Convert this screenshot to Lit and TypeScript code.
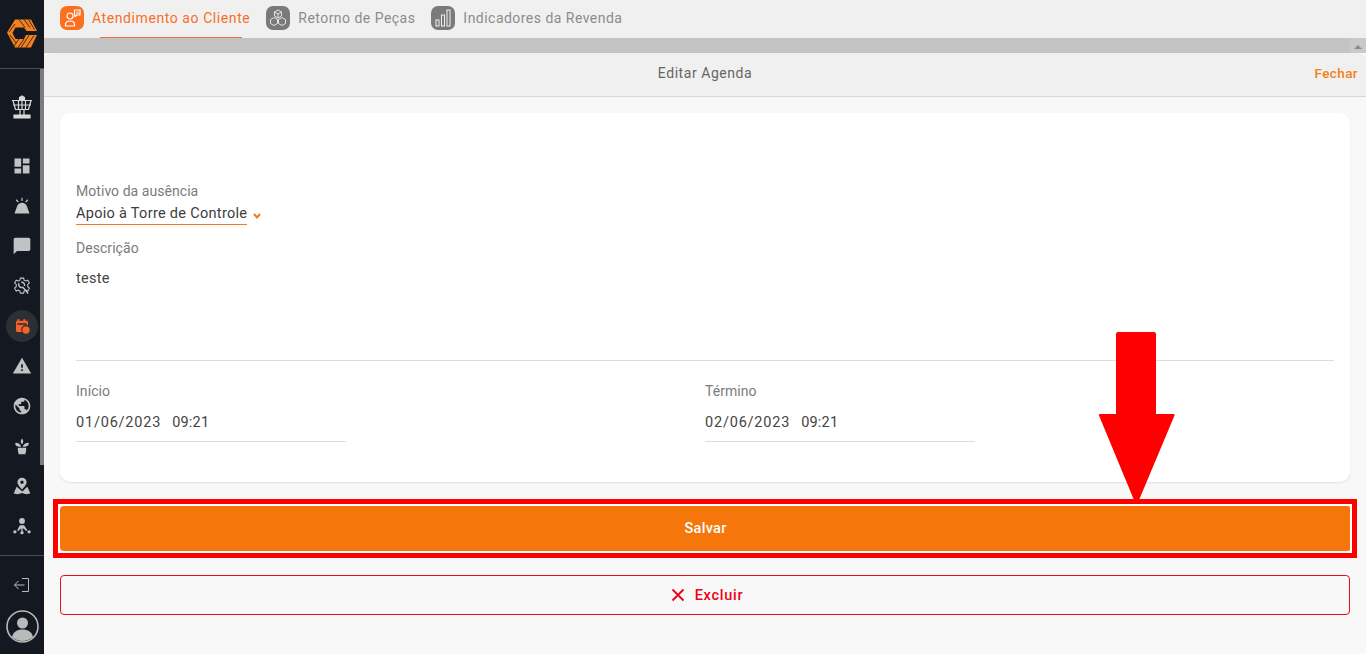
import { LitElement, html, css, svg } from "lit";
import { customElement } from "lit/decorators.js";

const navIcons = [
  svg`<path d="M3 3h8v10H3zM3 15h8v6H3zM13 3h8v6h-8zM13 11h8v10h-8z"/>`,
  svg`<path d="M3 21l3-8.500C7 9.500 9.500 8 12 8s5 1.500 6 4.500L21 21zM11.300 2h1.400v4h-1.400zM4.500 5l1.100-1 2.600 2.800-1.100 1zM19.500 5l-1.100-1-2.600 2.800 1.100 1z"/>`,
  svg`<path d="M20 2H4c-1.100 0-2 .9-2 2v18l4-4h14c1.100 0 2-.9 2-2V4c0-1.100-.9-2-2-2z"/>`,
  svg`<g fill="none" stroke="currentColor" stroke-width="1.300"><path d="M10 2.500h4l.5 2.500 2 1 2.400-1 2 3.400-2 1.700v2.800l2 1.700-2 3.400-2.400-1-2 1-.5 2.500h-4l-.5-2.500-2-1-2.400 1-2-3.400 2-1.700V10.100l-2-1.700 2-3.400 2.400 1 2-1z"/><path d="M8.500 8.500a3.500 3.500 0 0 0 4.500 5l6.500 7.500M11 7.500a3.500 3.500 0 0 1 4 4.500" stroke-width="1.700"/></g>`,
  null,
  svg`<path d="M1 21h22L12 2 1 21zm12-3h-2v-2h2v2zm0-4h-2v-4h2v4z"/>`,
  svg`<path d="M12 2C6.480 2 2 6.480 2 12s4.480 10 10 10 10-4.480 10-10S17.520 2 12 2zm-1 17.930c-3.950-.49-7-3.850-7-7.930 0-.62.08-1.210.21-1.790L9 15v1c0 1.100.9 2 2 2v1.930zm6.900-2.540c-.26-.81-1-1.390-1.900-1.390h-1v-3c0-.55-.45-1-1-1H8v-2h2c.55 0 1-.45 1-1V7h2c1.100 0 2-.9 2-2v-.41c2.930 1.190 5 4.060 5 7.410 0 2.080-.8 3.970-2.100 5.390z"/>`,
  svg`<path d="M7 14h10v3l-1 5H8l-1-5zM11 13C10 9 7 8 4 8c-.3 3 1 5 7 5zM13 13c1-4 4-5 7-5 .3 3-1 5-7 5zM12 10c-2-2-2-5 0-7 2 2 2 5 0 7z"/>`,
  svg`<path fill-rule="evenodd" d="M12 2a5.500 5.500 0 0 0-5.500 5.500C6.500 11 12 16 12 16s5.500-5 5.500-8.500A5.500 5.500 0 0 0 12 2zm0 3.500a2 2 0 1 1 0 4 2 2 0 0 1 0-4z"/><path d="M5.500 13L2 21l5 1 5-1.500 5 1.500 5-1-3.500-8-1.500 1-4.500 4.500L7 14z"/>`,
  svg`<circle cx="12" cy="6" r="3.500"/><circle cx="3.500" cy="19" r="2"/><circle cx="12" cy="20" r="2"/><circle cx="20.500" cy="19" r="2"/><path d="M9.500 11h5l4 6-1.500 1-3-3h-1.200V18h-1.600v-3H10.700l-3 3-1.500-1z"/>`,
];

@customElement("app-root")
export class AppRoot extends LitElement {
  static styles = css`
    :host {
      display: block;
      position: relative;
      width: 1366px;
      height: 654px;
      overflow: hidden;
      font-family: "Roboto", "Liberation Sans", sans-serif;
      background: #f8f8f8;
    }
    .shell { display: flex; height: 654px; }
    .side {
      width: 44px;
      flex: none;
      background: #141820;
      display: flex;
      flex-direction: column;
      align-items: center;
      position: relative;
    }
    .logo {
      width: 100%;
      height: 69px;
      flex: none;
      border-bottom: 1px solid #4a4d52;
      box-sizing: border-box;
      display: flex;
      align-items: center;
      justify-content: center;
    }
    .logo svg { width: 32px; height: 32px; margin-top: -5px; }
    .tower { margin-top: 25px; color: #d8d8d8; width: 24px; height: 26px; display: block; }
    .nav { margin-top: 26px; display: flex; flex-direction: column; align-items: center; }
    .item { width: 32px; height: 40px; display: flex; align-items: center; justify-content: center; color: #c0c2c4; }
    .item svg { width: 20px; height: 20px; fill: currentColor; }
    .item.active .disc {
      width: 32px; height: 32px; border-radius: 50%; background: #2c2f33;
      display: flex; align-items: center; justify-content: center;
    }
    .item.active svg { width: 16px; height: 16px; }
    .bottom {
      margin-top: auto;
      width: 100%;
      height: 99px;
      border-top: 1px solid #4a4d52;
      box-sizing: border-box;
      display: flex;
      flex-direction: column;
      align-items: center;
      color: #b8babc;
    }
    .exit { width: 18px; height: 18px; margin-top: 20px; }
    .avatar { width: 33px; height: 33px; margin-top: 16px; }
    .thumb { position: absolute; left: 40px; top: 69px; width: 4px; height: 396px; background: #7c7c7c; }

    .main { flex: 1; min-width: 0; display: flex; flex-direction: column; }
    .tabs { height: 38px; background: #f0f0f0; display: flex; align-items: flex-start; padding: 6px 0 0 16px; box-sizing: border-box; gap: 16px; flex: none; }
    .tab { display: flex; align-items: center; gap: 8px; height: 32px; position: relative; align-self: flex-start; color: #8c8c8c; font-size: 14px; letter-spacing: 0.47px; margin-top: -4px; }
    .tab.on { color: #f4702a; letter-spacing: 0.58px; }
    .tab.on::after { content: ""; position: absolute; left: 40px; width: 142px; top: 35px; height: 1px; background: #f0723a; }
    .tab svg { width: 24px; height: 24px; }
    .band { height: 15px; background: #c4c4c4; flex: none; display: flex; justify-content: flex-end; }
    .sbtn { width: 16px; background: #c9c9c9; display: flex; align-items: center; justify-content: center; }
    .tri { width: 0; height: 0; border-left: 4px solid transparent; border-right: 4px solid transparent; border-bottom: 4px solid #8a8a8a; margin-top: 3px; }
    .sheet { flex: 1; background: #f8f8f8; border-radius: 8px 8px 0 0; display: flex; flex-direction: column; overflow: hidden; }
    .head { height: 44px; flex: none; background: #f0f0f0; border-bottom: 1px solid #d8d8d8; box-sizing: border-box; padding-bottom: 3px; display: flex; align-items: center; justify-content: center; position: relative; font-size: 14px; letter-spacing: 0.55px; color: #666; }
    .close { position: absolute; right: 8px; color: #f77f14; font-weight: 500; font-size: 13.500px; letter-spacing: 0.4px; }
    .body { padding: 16px 16px 0; display: flex; flex-direction: column; }
    .card { height: 369px; box-sizing: border-box; background: #fff; border-radius: 10px; box-shadow: 0 1px 2px rgba(0,0,0,.1); padding: 69px 16px 0; display: flex; flex-direction: column; }
    .lab { font-size: 14px; color: #7b7b7b; line-height: 18px; letter-spacing: 0.05px; }
    .sel-row { display: flex; align-items: flex-end; gap: 6px; }
    .sel { font-size: 14.500px; letter-spacing: 0.3px; color: #3c3c3c; height: 25px; line-height: 27px; border-bottom: 1px solid #f07a20; box-sizing: border-box; }
    .chev { width: 8px; height: 6px; margin-bottom: 6px; }
    .desc-lab { margin-top: 14px; }
    .desc { height: 104px; box-sizing: border-box; padding-top: 12px; border-bottom: 1px solid #dcdcdc; font-size: 14.500px; line-height: 20px; color: #444; letter-spacing: 0.3px; }
    .dates { display: grid; grid-template-columns: 629px 1fr; margin-top: 21px; }
    .val { width: 270px; height: 42px; box-sizing: border-box; padding-top: 13px; border-bottom: 1px solid #dcdcdc; font-size: 14.500px; line-height: 20px; color: #444; letter-spacing: 0.2px; display: flex; gap: 11px; }
    .day { letter-spacing: 0.8px; }
    .save { margin-top: 24px; height: 45px; width: 1291px; background: #f5770c; border-radius: 4px; color: #fff; font-weight: 500; font-size: 14.500px; letter-spacing: .3px; display: flex; align-items: center; justify-content: center; }
    .del { margin-top: 24px; height: 40px; box-sizing: border-box; border: 1px solid #ee0a1a; border-radius: 4px; color: #f00014; font-weight: 500; font-size: 14.500px; letter-spacing: .75px; padding-left: 4px; display: flex; align-items: center; justify-content: center; gap: 10px; }
    .del svg { width: 14px; height: 14px; }
    .frame { position: absolute; left: 53px; top: 499px; width: 1304px; height: 59px; box-sizing: border-box; border: 5px solid #ff0000; pointer-events: none; }
    .frame::after { content: ""; position: absolute; inset: 0; border: 2px solid #fff; }
    .arrow { position: absolute; left: 1098px; top: 331px; width: 77px; height: 170px; }
  `;

  render() {
    return html`
      <div class="shell">
        <aside class="side">
          <div class="logo">
            <svg viewBox="0 0 32 32">
              <path fill="#f5801e" d="M1 16.500 9 3.500h16l6 11.500H20.500L18 11.500H9.500l-3 5.500 3 6H18l2-4h11l-6 12.500H9z"/>
              <g stroke="#141820" stroke-width=".8" fill="none">
                <path d="M13 3.500l6 8M18 3.500l6 8M22.500 3.500l6 10M9 8L3 16M7.500 5L2 13M4 19l6 8M13 23l-6 8.500M18 23l-6 8.500M23 19.500l-8 12M28 19.500l-8 12"/>
              </g>
            </svg>
          </div>
          <svg class="tower" viewBox="0 0 24 26" fill="none" stroke="currentColor" stroke-width="1.200">
            <path d="M9.500 6V3.500L12 2l2.500 1.500V6z" fill="currentColor"/>
            <path d="M2 6.500h20M3 6.500l2.500 9h13l2.500-9M8.500 7v8M12 7v8M15.500 7v8M3 11h18"/>
            <path d="M10 15.500v5M14 15.500v5M4 21h16v3H4z" fill="currentColor"/>
          </svg>
          <nav class="nav">
            ${navIcons.map((ic) =>
              ic
                ? html`<div class="item"><svg viewBox="0 0 24 24">${ic}</svg></div>`
                : html`<div class="item active"><div class="disc">
                    <svg viewBox="0 0 24 24" style="fill:#f4622a">
                      <path d="M5 2h3v2h6V2h3v2h2a2 2 0 0 1 2 2v5a7 7 0 0 0-9 10H5a2 2 0 0 1-2-2V6a2 2 0 0 1 2-2zM5 8v2h14V8z"/>
                      <circle cx="18" cy="18" r="5.500"/>
                    </svg></div></div>`
            )}
          </nav>
          <div class="bottom">
            <svg class="exit" viewBox="0 0 18 18" fill="none" stroke="currentColor" stroke-width="1">
              <path d="M9 2.500h6.500v13H9M11.500 9H1.500M5.500 5L1.500 9l4 4"/>
            </svg>
            <svg class="avatar" viewBox="0 0 33 33">
              <circle cx="16.500" cy="16.500" r="15.500" fill="none" stroke="currentColor" stroke-width="1.600"/>
              <circle cx="16.500" cy="13" r="5.500" fill="currentColor"/>
              <path d="M6 27c1-5 5-7.500 10.500-7.500S26 22 27 27c-3 2.500-6.500 4-10.500 4S9 29.500 6 27z" fill="currentColor"/>
            </svg>
          </div>
          <div class="thumb"></div>
        </aside>
        <main class="main">
          <div class="tabs">
            <div class="tab on">
              <svg viewBox="0 0 24 24">
                <rect width="24" height="24" rx="7" fill="#fb6f1f"/>
                <g fill="none" stroke="#fff" stroke-width="1.200">
                  <circle cx="10" cy="10" r="3"/>
                  <path d="M5.500 20v-1.500c0-2.500 2-3.500 4.500-3.500s4.500 1 4.500 3.500V20z"/>
                  <path d="M14.500 4h5.500v5h-3l-2 1.500V9h-.5z"/>
                  <path d="M16 6h3M16 7.500h3" stroke-width=".7"/>
                </g>
              </svg>
              <span>Atendimento ao Cliente</span>
            </div>
            <div class="tab">
              <svg viewBox="0 0 24 24">
                <rect width="24" height="24" rx="7" fill="#7a7a7a"/>
                <g fill="none" stroke="#e4e4e4" stroke-width="1">
                  <path d="M12 4l3.500 2v4L12 12 8.500 10V6zM8 11.500l3.500 2v4L8 19.500l-3.500-2v-4zM16 11.500l3.500 2v4L16 19.500l-3.500-2v-4zM8.500 6L12 8l3.500-2M12 8v4"/>
                </g>
              </svg>
              <span>Retorno de Peças</span>
            </div>
            <div class="tab">
              <svg viewBox="0 0 24 24">
                <rect width="24" height="24" rx="7" fill="#7a7a7a"/>
                <g fill="none" stroke="#f0f0f0" stroke-width="1">
                  <rect x="5" y="14" width="3" height="6"/>
                  <rect x="10.500" y="9" width="3" height="11"/>
                  <rect x="16" y="4" width="3" height="16"/>
                </g>
              </svg>
              <span>Indicadores da Revenda</span>
            </div>
          </div>
          <div class="band"><div class="sbtn"><div class="tri"></div></div></div>
          <section class="sheet">
            <header class="head">Editar Agenda<span class="close">Fechar</span></header>
            <div class="body">
              <div class="card">
                <div class="lab">Motivo da ausência</div>
                <div class="sel-row">
                  <div class="sel">Apoio à Torre de Controle</div>
                  <svg class="chev" viewBox="0 0 8 6" fill="none" stroke="#f07a20" stroke-width="2"><path d="M1 1l3 3.500L7 1"/></svg>
                </div>
                <div class="lab desc-lab">Descrição</div>
                <div class="desc">teste</div>
                <div class="dates">
                  <div><div class="lab">Início</div><div class="val"><span class="day">01/06/2023</span><span>09:21</span></div></div>
                  <div><div class="lab">Término</div><div class="val"><span class="day">02/06/2023</span><span>09:21</span></div></div>
                </div>
              </div>
              <div class="save">Salvar</div>
              <div class="del">
                <svg viewBox="0 0 14 14" fill="none" stroke="#f00014" stroke-width="1.800"><path d="M1.500 1.500l11 11M12.500 1.500l-11 11"/></svg>
                Excluir
              </div>
            </div>
          </section>
        </main>
      </div>
      <div class="frame"></div>
      <svg class="arrow" viewBox="0 0 77 170">
        <path fill="#ff0000" d="M20 1h36a2 2 0 0 1 2 2v80h17.500a1 1 0 0 1 1 1.500L41 169h-5L1 84.500a1 1 0 0 1 1-1.500h16V3a2 2 0 0 1 2-2z"/>
      </svg>
    `;
  }
}
